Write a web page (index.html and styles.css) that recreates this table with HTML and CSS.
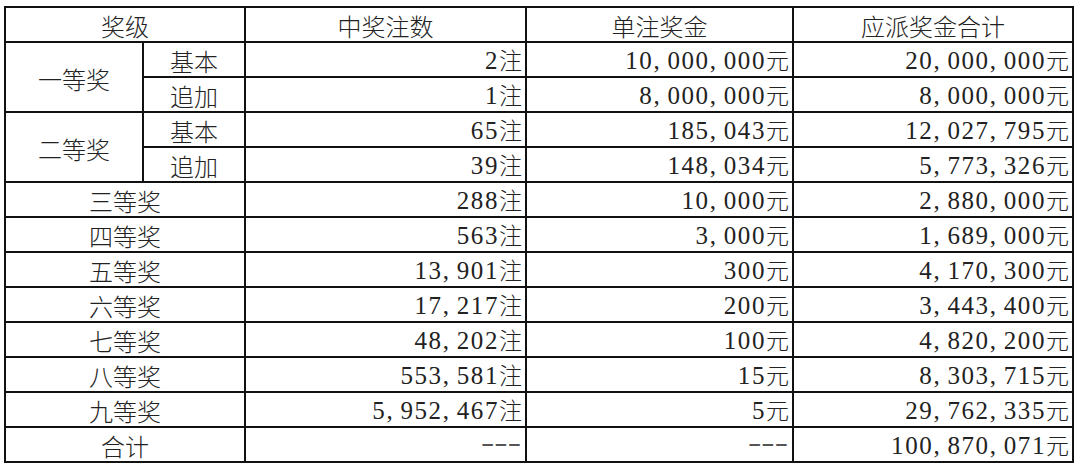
FILE: index.html
```html
<!DOCTYPE html>
<html lang="zh-CN">
<head>
<meta charset="utf-8">
<title>开奖详情</title>
<link rel="stylesheet" href="styles.css">
</head>
<body>
<table class="prize">
  <colgroup>
    <col class="c-level">
    <col class="c-sub">
    <col class="c-count">
    <col class="c-single">
    <col class="c-total">
  </colgroup>
  <thead>
    <tr>
      <th colspan="2">奖级</th>
      <th>中奖注数</th>
      <th>单注奖金</th>
      <th>应派奖金合计</th>
    </tr>
  </thead>
  <tbody>
    <tr>
      <td class="lv" rowspan="2">一等奖</td>
      <td class="lv">基本</td>
      <td class="num">2<span class="u">注</span></td>
      <td class="num">10<span class="cm">,</span>000<span class="cm">,</span>000<span class="u">元</span></td>
      <td class="num">20<span class="cm">,</span>000<span class="cm">,</span>000<span class="u">元</span></td>
    </tr>
    <tr>
      <td class="lv">追加</td>
      <td class="num">1<span class="u">注</span></td>
      <td class="num">8<span class="cm">,</span>000<span class="cm">,</span>000<span class="u">元</span></td>
      <td class="num">8<span class="cm">,</span>000<span class="cm">,</span>000<span class="u">元</span></td>
    </tr>
    <tr>
      <td class="lv" rowspan="2">二等奖</td>
      <td class="lv">基本</td>
      <td class="num">65<span class="u">注</span></td>
      <td class="num">185<span class="cm">,</span>043<span class="u">元</span></td>
      <td class="num">12<span class="cm">,</span>027<span class="cm">,</span>795<span class="u">元</span></td>
    </tr>
    <tr>
      <td class="lv">追加</td>
      <td class="num">39<span class="u">注</span></td>
      <td class="num">148<span class="cm">,</span>034<span class="u">元</span></td>
      <td class="num">5<span class="cm">,</span>773<span class="cm">,</span>326<span class="u">元</span></td>
    </tr>
    <tr>
      <td class="lv" colspan="2">三等奖</td>
      <td class="num">288<span class="u">注</span></td>
      <td class="num">10<span class="cm">,</span>000<span class="u">元</span></td>
      <td class="num">2<span class="cm">,</span>880<span class="cm">,</span>000<span class="u">元</span></td>
    </tr>
    <tr>
      <td class="lv" colspan="2">四等奖</td>
      <td class="num">563<span class="u">注</span></td>
      <td class="num">3<span class="cm">,</span>000<span class="u">元</span></td>
      <td class="num">1<span class="cm">,</span>689<span class="cm">,</span>000<span class="u">元</span></td>
    </tr>
    <tr>
      <td class="lv" colspan="2">五等奖</td>
      <td class="num">13<span class="cm">,</span>901<span class="u">注</span></td>
      <td class="num">300<span class="u">元</span></td>
      <td class="num">4<span class="cm">,</span>170<span class="cm">,</span>300<span class="u">元</span></td>
    </tr>
    <tr>
      <td class="lv" colspan="2">六等奖</td>
      <td class="num">17<span class="cm">,</span>217<span class="u">注</span></td>
      <td class="num">200<span class="u">元</span></td>
      <td class="num">3<span class="cm">,</span>443<span class="cm">,</span>400<span class="u">元</span></td>
    </tr>
    <tr>
      <td class="lv" colspan="2">七等奖</td>
      <td class="num">48<span class="cm">,</span>202<span class="u">注</span></td>
      <td class="num">100<span class="u">元</span></td>
      <td class="num">4<span class="cm">,</span>820<span class="cm">,</span>200<span class="u">元</span></td>
    </tr>
    <tr>
      <td class="lv" colspan="2">八等奖</td>
      <td class="num">553<span class="cm">,</span>581<span class="u">注</span></td>
      <td class="num">15<span class="u">元</span></td>
      <td class="num">8<span class="cm">,</span>303<span class="cm">,</span>715<span class="u">元</span></td>
    </tr>
    <tr>
      <td class="lv" colspan="2">九等奖</td>
      <td class="num">5<span class="cm">,</span>952<span class="cm">,</span>467<span class="u">注</span></td>
      <td class="num">5<span class="u">元</span></td>
      <td class="num">29<span class="cm">,</span>762<span class="cm">,</span>335<span class="u">元</span></td>
    </tr>
    <tr>
      <td class="lv" colspan="2">合计</td>
      <td class="num"><span class="dl">---</span></td>
      <td class="num"><span class="dl">---</span></td>
      <td class="num">100<span class="cm">,</span>870<span class="cm">,</span>071<span class="u">元</span></td>
    </tr>
  </tbody>
</table>
</body>
</html>
```
FILE: styles.css
```css
html, body {
  margin: 0;
  padding: 0;
  background: #ffffff;
}

body {
  padding: 6px 0 0 4px;
  font-family: "Noto Sans CJK SC", "Noto Sans", sans-serif;
  color: #222222;
}

.prize {
  border-collapse: collapse;
  table-layout: fixed;
  width: 1068px;
}

.c-level { width: 138px; }
.c-sub { width: 102px; }
.c-count { width: 281px; }
.c-single { width: 267px; }
.c-total { width: 280px; }

.prize th,
.prize td {
  box-sizing: border-box;
  height: 35px;
  border: 2px solid #111111;
  padding: 2px 4px 0 4px;
  font-size: 24px;
  line-height: 26px;
  font-weight: 300;
  white-space: nowrap;
  overflow: hidden;
  vertical-align: middle;
}

.prize th {
  text-align: center;
}

.prize td.lv {
  text-align: center;
  padding-top: 3px;
}

.prize td.num {
  text-align: right;
  padding-right: 3px;
  padding-top: 3px;
  font-family: "Liberation Serif", "Noto Sans CJK SC", serif;
  font-size: 25px;
  letter-spacing: 1.6px;
}

.prize td.num .u {
  font-family: "Noto Sans CJK SC", sans-serif;
  font-size: 23px;
  line-height: 20px;
  letter-spacing: 0;
}

.prize td.num .cm {
  display: inline-block;
  width: 14px;
  line-height: 20px;
  text-align: left;
  letter-spacing: 0;
}

.prize td.num .dl {
  display: inline-block;
  color: #555555;
  letter-spacing: 0;
  line-height: 20px;
  vertical-align: 4px;
  transform: scaleX(1.6);
  transform-origin: right center;
  margin-right: 1px;
}
```
